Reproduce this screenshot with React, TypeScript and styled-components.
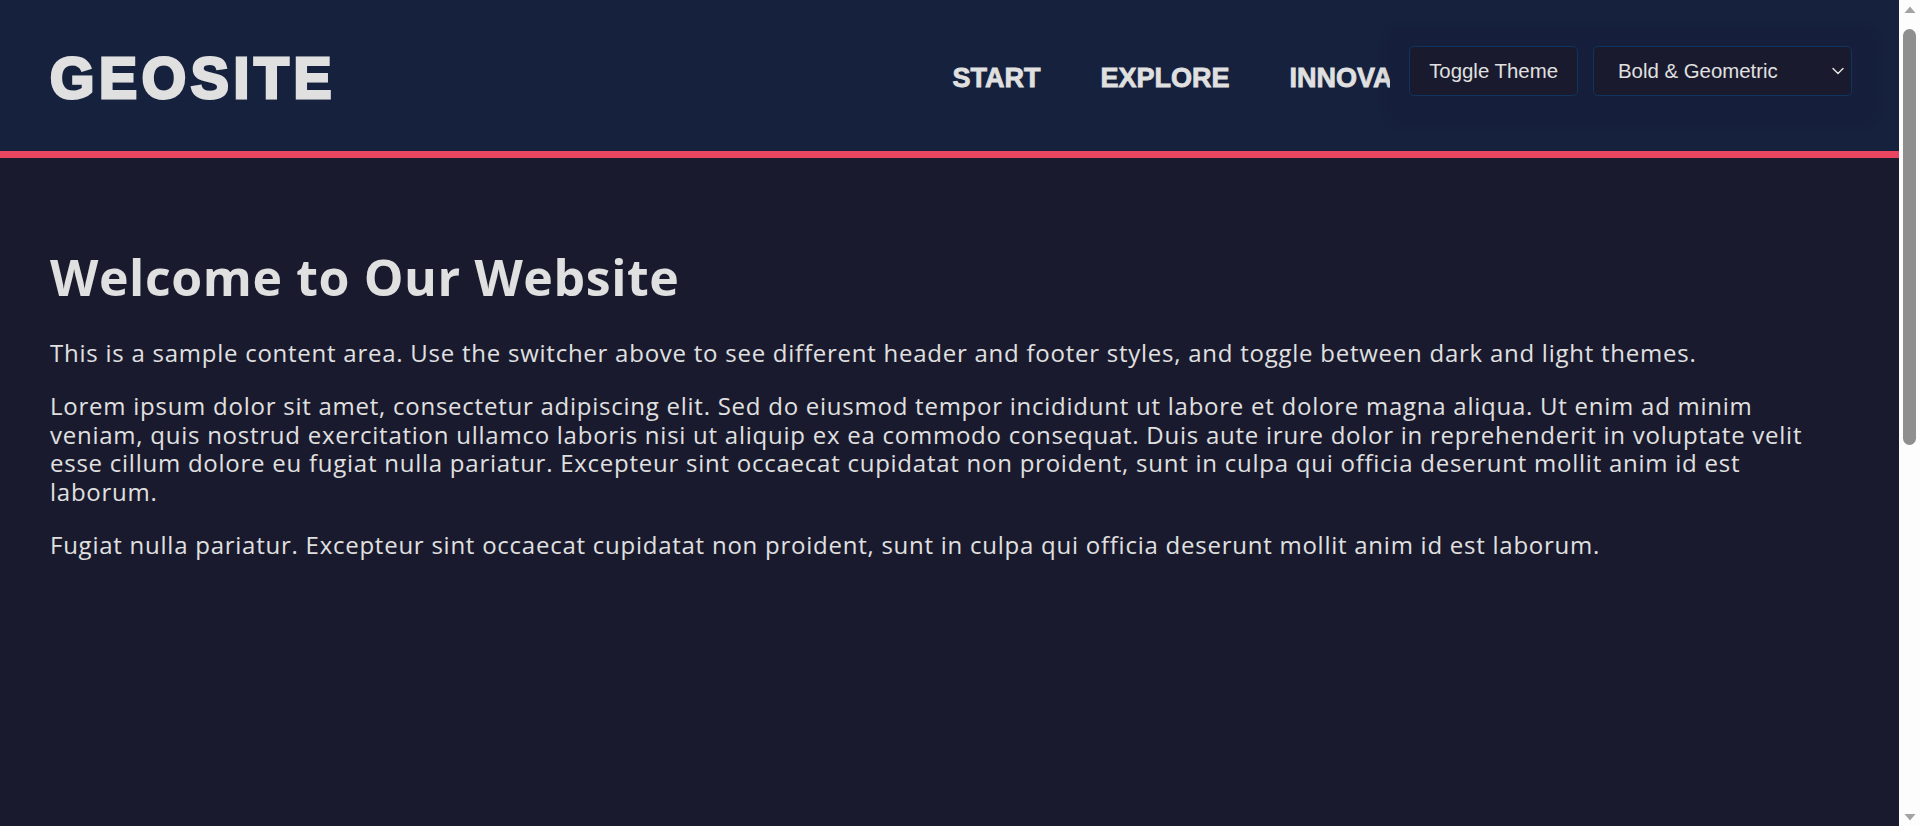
import React from 'react';
import styled, { createGlobalStyle } from 'styled-components';
import { ChevronDown } from 'lucide-react';

const colors = {
  page: '#1a1a2e',
  header: '#16213e',
  panel: '#151f3c',
  accent: '#e94560',
  line: '#0f3460',
  text: '#e0e0e0',
};

const GlobalStyles = createGlobalStyle`
  * {
    box-sizing: border-box;
  }
  html, body {
    margin: 0;
    padding: 0;
    overflow: hidden;
  }
  body {
    background: ${colors.page};
    color: ${colors.text};
    font-family: "Open Sans", "Noto Sans", sans-serif;
  }
`;

const Page = styled.div`
  height: 100vh;
  overflow-y: scroll;
  scrollbar-width: none;
`;

// window scrollbar, drawn over the right edge like the browser one
const ScrollBar = styled.div`
  position: fixed;
  top: 0;
  right: 0;
  bottom: 0;
  z-index: 20;
  width: 21px;
  display: flex;
  flex-direction: column;
  align-items: center;
  background: #fdfdfd;
`;

const ScrollArrow = styled.svg`
  flex: none;
  margin: 6px 0 5px;
`;

const ScrollThumb = styled.div`
  width: 13px;
  height: 416px;
  margin-top: 11px;
  border-radius: 7px;
  background: #8f8f8f;
`;

const ScrollSpace = styled.div`
  flex: 1;
`;

const Header = styled.header`
  display: flex;
  align-items: center;
  justify-content: space-between;
  height: 158px;
  padding: 5px 75px 0 50px;
  background: ${colors.header};
  border-bottom: 7px solid ${colors.accent};
`;

const Logo = styled.div`
  font-family: "Liberation Sans", Arial, sans-serif;
  font-weight: 700;
  font-size: 57px;
  letter-spacing: 4.7px;
  -webkit-text-stroke: 3px ${colors.text};
  color: ${colors.text};
  text-transform: uppercase;
`;

const Nav = styled.nav`
  display: flex;
  gap: 60px;
`;

const NavLink = styled.a`
  font-family: "Liberation Sans", Arial, sans-serif;
  font-weight: 700;
  font-size: 27px;
  color: ${colors.text};
  -webkit-text-stroke: 0.8px ${colors.text};
  text-decoration: none;
  text-transform: uppercase;
`;

const Controls = styled.div`
  position: fixed;
  top: 28px;
  right: 48px;
  z-index: 10;
  display: flex;
  gap: 15px;
  padding: 18px 20px 20px 19px;
  background: ${colors.panel};
  border-radius: 10px;
  box-shadow: 0 4px 14px rgba(0, 0, 0, 0.1);
`;

const ThemeButton = styled.button`
  height: 50px;
  padding: 0 19px;
  font-family: "Liberation Sans", Arial, sans-serif;
  font-size: 20.4px;
  color: ${colors.text};
  background: ${colors.page};
  border: 1px solid ${colors.line};
  border-radius: 5px;
  cursor: pointer;
`;

const SelectWrap = styled.div`
  position: relative;
  display: flex;
  align-items: center;
  color: ${colors.text};

  svg {
    position: absolute;
    right: 4px;
    pointer-events: none;
  }
`;

const StyleSelect = styled.select`
  appearance: none;
  width: 259px;
  height: 50px;
  padding: 0 24px;
  font-family: "Liberation Sans", Arial, sans-serif;
  font-size: 20.4px;
  color: ${colors.text};
  background: ${colors.page};
  border: 1px solid ${colors.line};
  border-radius: 5px;
`;

const Main = styled.main`
  min-height: 1384px;
  padding: 89px 76px 0 50px;
`;

const Title = styled.h1`
  margin: 0 0 31px;
  font-size: 50px;
  font-weight: 700;
  line-height: 61px;
  letter-spacing: 0.6px;
`;

const Text = styled.p`
  margin: 24px 0;
  font-size: 24px;
  line-height: 28.8px;
  letter-spacing: 0.75px;
`;

const navItems = ['Start', 'Explore', 'Innovate', 'Connect', 'Community'];

export default function App() {
  return (
    <>
      <GlobalStyles />
      <Page>
        <Header>
          <Logo>GeoSite</Logo>
          <Nav>
            {navItems.map((item) => (
              <NavLink key={item} href="#">
                {item}
              </NavLink>
            ))}
          </Nav>
        </Header>
        <Main>
          <Title>Welcome to Our Website</Title>
          <Text>
            This is a sample content area. Use the switcher above to see different header and
            footer styles, and toggle between dark and light themes.
          </Text>
          <Text>
            Lorem ipsum dolor sit amet, consectetur adipiscing elit. Sed do eiusmod tempor
            incididunt ut labore et dolore magna aliqua. Ut enim ad minim veniam, quis nostrud
            exercitation ullamco laboris nisi ut aliquip ex ea commodo consequat. Duis aute irure
            dolor in reprehenderit in voluptate velit esse cillum dolore eu fugiat nulla pariatur.
            Excepteur sint occaecat cupidatat non proident, sunt in culpa qui officia deserunt
            mollit anim id est laborum.
          </Text>
          <Text>
            Fugiat nulla pariatur. Excepteur sint occaecat cupidatat non proident, sunt in culpa
            qui officia deserunt mollit anim id est laborum.
          </Text>
        </Main>
      </Page>
      <Controls>
        <ThemeButton>Toggle Theme</ThemeButton>
        <SelectWrap>
          <StyleSelect defaultValue="bold">
            <option value="bold">Bold &amp; Geometric</option>
            <option value="minimal">Minimal</option>
            <option value="classic">Classic</option>
          </StyleSelect>
          <ChevronDown size={20} strokeWidth={1.8} />
        </SelectWrap>
      </Controls>
      <ScrollBar>
        <ScrollArrow width="12" height="7" viewBox="0 0 12 7">
          <path d="M6 0.5 L11.5 7 L0.5 7 Z" fill="#a3a3a3" />
        </ScrollArrow>
        <ScrollThumb />
        <ScrollSpace />
        <ScrollArrow width="12" height="7" viewBox="0 0 12 7">
          <path d="M0.5 0 L11.5 0 L6 6.5 Z" fill="#a3a3a3" />
        </ScrollArrow>
      </ScrollBar>
    </>
  );
}
